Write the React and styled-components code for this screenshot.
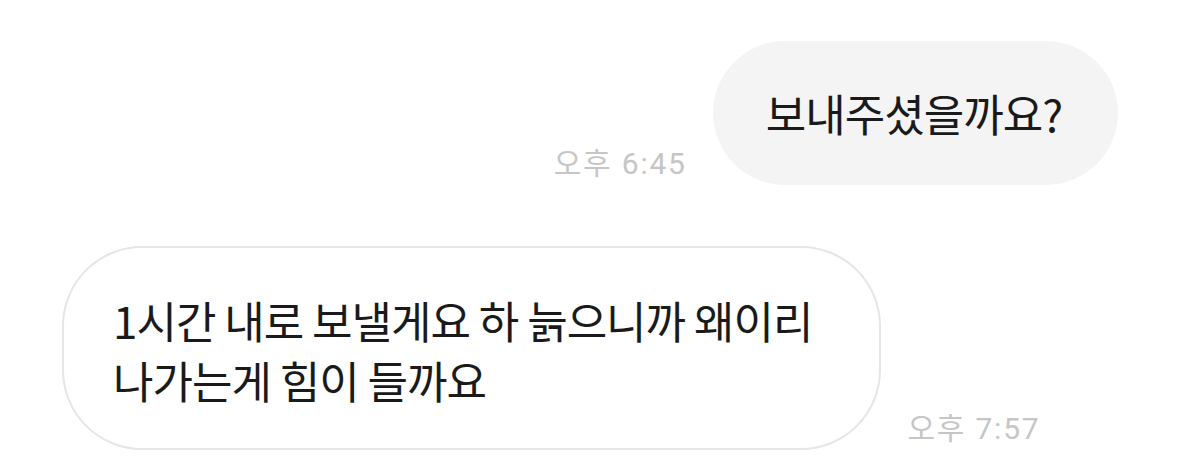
import React from 'react';
import styled, {createGlobalStyle} from 'styled-components';

const GlobalStyle = createGlobalStyle`
  html, body {
    margin: 0;
    padding: 0;
    background: #ffffff;
  }
  body {
    font-family: "Noto Sans CJK KR", "Noto Sans", sans-serif;
    -webkit-font-smoothing: antialiased;
  }
`;

const Thread = styled.div`
  display: flex;
  flex-direction: column;
  gap: 61px;
  padding: 41px 61px 0 62px;
`;

const Row = styled.div`
  display: flex;
  align-items: flex-end;
  justify-content: ${props => props.mine ? 'flex-end' : 'flex-start'};
  gap: 26px;
`;

const Bubble = styled.div`
  box-sizing: border-box;
  font-size: 44px;
  font-weight: 400;
  line-height: 60px;
  letter-spacing: -1px;
  color: #1a1a1a;
  white-space: nowrap;
  border-radius: 80px;
  background: ${props => props.mine ? '#f4f4f4' : '#ffffff'};
  border: ${props => props.mine ? 'none' : '2px solid #e6e6e6'};
  padding: ${props => props.mine ? '42px 56px 42px 53px' : '42px 67px 38px 49px'};
`;

const Time = styled.span`
  font-family: Roboto, "Noto Sans CJK KR", sans-serif;
  font-size: 30px;
  letter-spacing: 1.8px;
  line-height: 34px;
  color: #c6c6c6;
  white-space: nowrap;
  margin-bottom: 4px;
`;

export default function App() {
    return (
        <>
            <GlobalStyle/>
            <Thread>
                <Row mine>
                    <Time>오후 6:45</Time>
                    <Bubble mine>보내주셨을까요?</Bubble>
                </Row>
                <Row>
                    <Bubble>
                        1시간 내로 보낼게요 하 늙으니까 왜이리<br/>
                        나가는게 힘이 들까요
                    </Bubble>
                    <Time>오후 7:57</Time>
                </Row>
            </Thread>
        </>
    );
}
